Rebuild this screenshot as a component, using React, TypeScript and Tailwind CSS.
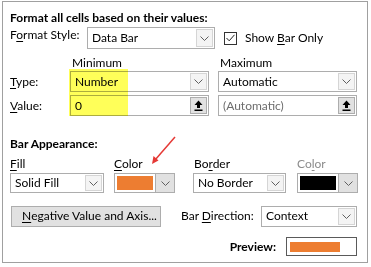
import type { ReactNode } from 'react'

const Chevron = () => (
  <svg width="9" height="5" viewBox="0 0 9 5" fill="none">
    <path d="M0.5 0.5 L4.5 4.5 L8.5 0.5" stroke="#606060" strokeWidth="1" />
  </svg>
)

const UploadIcon = () => (
  <svg width="9" height="11" viewBox="0 0 9 11">
    <path d="M4.5 0.5 L8.5 5 L6 5 L6 8 L3 8 L3 5 L0.5 5 Z" fill="#000" />
    <rect x="0.5" y="9.5" width="8" height="1.5" fill="#000" />
  </svg>
)

function Key({ children }: { children: ReactNode }) {
  return <span className="underline underline-offset-2 decoration-1">{children}</span>
}

function Select({
  value,
  width,
  height = 'h-[21px]',
}: {
  value: string
  width: string
  height?: string
}) {
  return (
    <div className={`${width} ${height} flex items-center border border-[#adadad] bg-white`}>
      <span className="flex-1 whitespace-nowrap pl-[4px] text-black">{value}</span>
      <div className="mr-[1px] flex h-[calc(100%-2px)] w-[17px] items-center justify-center border border-[#d5d5d5] bg-[#f4f4f4]">
        <Chevron />
      </div>
    </div>
  )
}

function ValueInput({ value, muted, width }: { value: string; muted?: boolean; width: string }) {
  return (
    <div className={`${width} flex h-[21px] items-center border border-[#adadad] bg-white`}>
      <span className={`flex-1 pl-[4px] ${muted ? 'text-[#6d6d6d]' : 'text-black'}`}>{value}</span>
      <div className="mr-[1px] flex h-[17px] w-[17px] items-center justify-center border border-[#adadad] bg-[#e1e1e1]">
        <UploadIcon />
      </div>
    </div>
  )
}

function ColorSelect({ color }: { color: string }) {
  return (
    <div className="flex h-[20px] w-[61px] items-stretch border border-[#adadad] bg-white">
      <div className="flex-1 p-[2px]">
        <div className="h-full w-full" style={{ backgroundColor: color }} />
      </div>
      <div className="flex w-[19px] items-center justify-center border-l border-[#adadad] bg-[#e1e1e1]">
        <Chevron />
      </div>
    </div>
  )
}

export default function App() {
  return (
    <div className="relative h-[267px] w-[371px] whitespace-nowrap bg-white font-['Lato','Open_Sans',sans-serif] text-[12px] leading-[16px] text-black">
      <div className="ml-[2px] pt-[1px]">
        <div className="flex h-[262px] w-[366px] flex-col border border-[#a0a0a0] pl-[7px] pr-[9px]">
          <div className="mt-[8px] h-[16px] font-bold">Format all cells based on their values:</div>

          <div className="mt-[1px] flex h-[22px] items-center">
            <span className="w-[77px] self-start">
              F<Key>o</Key>rmat Style:
            </span>
            <Select value="Data Bar" width="w-[128px]" height="h-[22px]" />
            <div className="ml-[9px] flex h-[13px] w-[13px] items-center justify-center border border-[#333] bg-white">
              <svg width="9" height="8" viewBox="0 0 9 8" fill="none">
                <path d="M0.5 4 L3.2 6.8 L8.5 0.8" stroke="#222" strokeWidth="1" />
              </svg>
            </div>
            <span className="ml-[8px]">
              Show <Key>B</Key>ar Only
            </span>
          </div>

          <div className="mt-[6px] flex h-[16px]">
            <span className="ml-[62px] w-[148px]">Minimum</span>
            <span>Maximum</span>
          </div>

          <div className="relative">
            <div className="flex h-[21px] items-center">
              <span className="w-[60px]">
                <Key>T</Key>ype:
              </span>
              <Select value="Number" width="w-[139px]" />
              <div className="ml-[9px]">
                <Select value="Automatic" width="w-[139px]" />
              </div>
            </div>

            <div className="mt-[3px] flex h-[21px] items-center">
              <span className="w-[60px]">
                <Key>V</Key>alue:
              </span>
              <ValueInput value="0" width="w-[139px]" />
              <div className="ml-[9px]">
                <ValueInput value="(Automatic)" muted width="w-[139px]" />
              </div>
            </div>

            <div className="pointer-events-none absolute left-[59px] top-[-2px] h-[47px] w-[59px] bg-[#ffff3c] opacity-85 mix-blend-multiply" />
          </div>

          <div className="mt-[20px] h-[16px] font-bold">Bar Appearance:</div>

          <div className="mt-[4px] flex h-[16px]">
            <span className="w-[104px]">
              <Key>F</Key>ill
            </span>
            <span className="w-[80px]">
              <Key>C</Key>olor
            </span>
            <span className="w-[103px]">
              Bo<Key>r</Key>der
            </span>
            <span className="text-[#8c8c8c]">
              Co<Key>l</Key>or
            </span>
          </div>

          <div className="mt-[1px] flex h-[20px] items-center">
            <Select value="Solid Fill" width="w-[94px]" height="h-[20px]" />
            <div className="ml-[10px]">
              <ColorSelect color="#ed7d31" />
            </div>
            <div className="ml-[18px]">
              <Select value="No Border" width="w-[93px]" height="h-[20px]" />
            </div>
            <div className="ml-[11px]">
              <ColorSelect color="#000000" />
            </div>
          </div>

          <div className="mt-[12px] flex h-[22px] items-center">
            <button className="ml-[1px] flex h-[21px] w-[150px] items-center whitespace-nowrap border border-[#adadad] bg-[#e1e1e1] pl-[10px] text-left">
              <Key>N</Key>egative Value and Axis...
            </button>
            <span className="ml-[20px] w-[80px]">
              Bar <Key>D</Key>irection:
            </span>
            <Select value="Context" width="w-[96px]" height="h-[21px]" />
          </div>

          <div className="mt-[10px] flex h-[19px] items-center justify-end pr-[1px]">
            <span className="font-bold">Preview:</span>
            <div className="ml-[10px] flex h-[19px] w-[71px] items-center border border-[#5a5a5a] bg-white px-[3px]">
              <div className="h-[10px] w-[50px] bg-[#ed7d31]" />
            </div>
          </div>
        </div>
      </div>

      <svg className="pointer-events-none absolute left-0 top-0" width="371" height="267" viewBox="0 0 371 267">
        <line x1="175" y1="137" x2="155" y2="160" stroke="#e53935" strokeWidth="1.5" />
        <path d="M152 164 L153.5 156 L158.5 160.5 Z" fill="#e53935" />
      </svg>
    </div>
  )
}
